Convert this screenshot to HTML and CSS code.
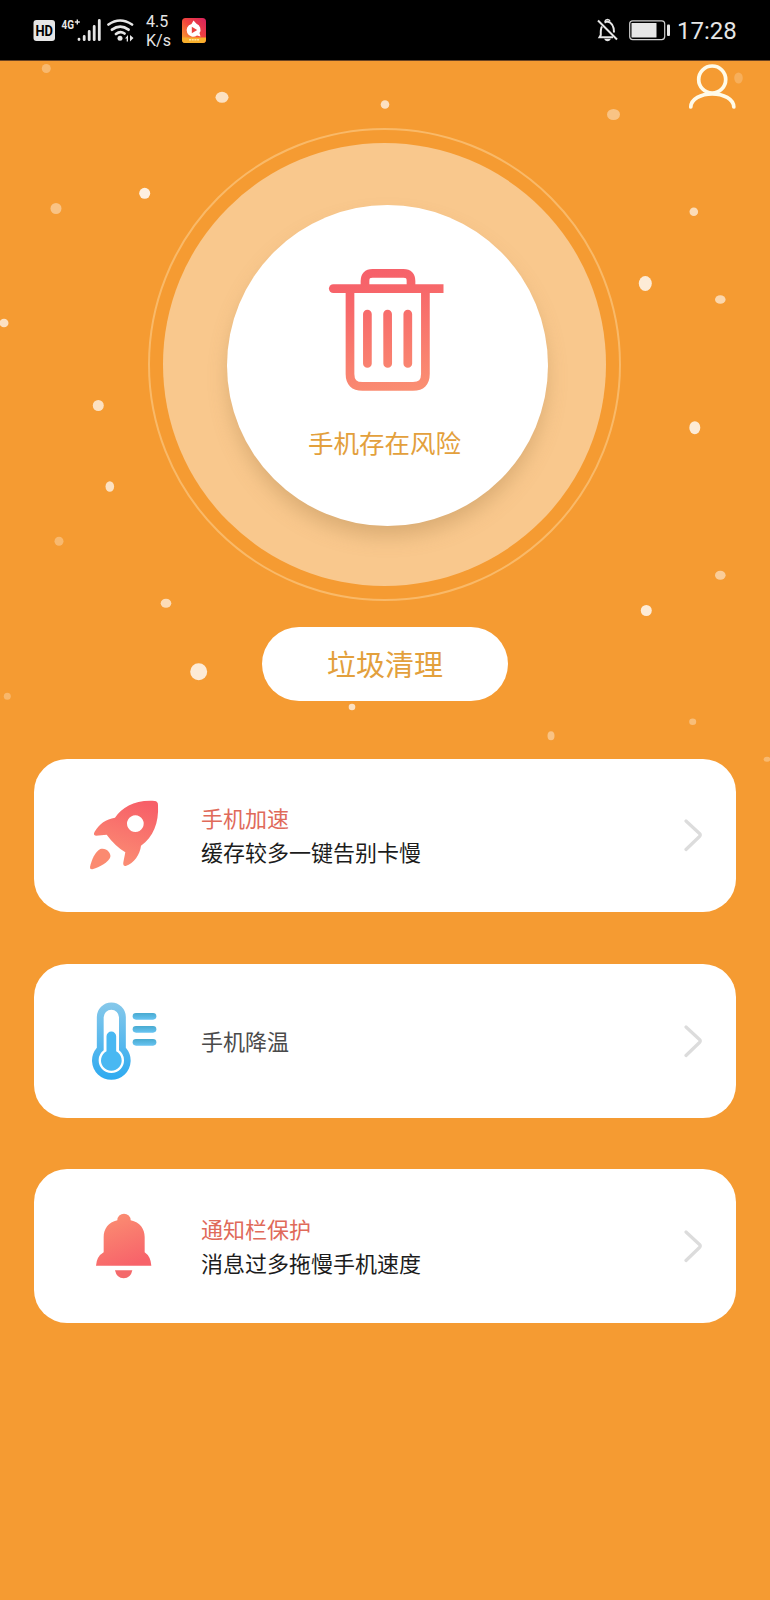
FILE: index.html
```html
<!DOCTYPE html>
<html lang="zh-CN">
<head>
  <meta charset="UTF-8" />
  <title>手机清理</title>
  <meta name="viewport" content="width=device-width, initial-scale=1" />
  <link rel="stylesheet" href="styles.css">
</head>
<body>
  <header class="status">
    <svg class="status-left" width="106" height="30" viewBox="30 15 106 30">
      <rect x="33.500" y="20" width="21.500" height="21" rx="3" fill="#e6e6e6"/>
      <text class="hd" x="35.500" y="35.500" textLength="17.500" lengthAdjust="spacingAndGlyphs">HD</text>
      <text class="net" x="61.500" y="29" textLength="12.500" lengthAdjust="spacingAndGlyphs">4G</text>
      <path d="M77.300 19.500v5M74.800 22h5" stroke="#e6e6e6" stroke-width="1.400"/>
      <g stroke="#e6e6e6" stroke-width="2.800" stroke-linecap="round">
        <path d="M79 39.200v.4M84.200 36.500v3.200M89.200 31.500v8.200M94.200 26.500v13.200M99.300 20.500v19.200"/>
      </g>
      <g fill="none" stroke="#e6e6e6" stroke-width="2.700" stroke-linecap="round">
        <path d="M108.500 24.500Q120 16.500 132 24.500M112 29.700Q120.300 23.500 128.500 29.700M116 34Q120.300 30.500 124.500 33.500"/>
      </g>
      <circle cx="120" cy="38.300" r="2.500" fill="#e6e6e6"/>
      <path d="M128 35v6.500h-1.300v-3H125zM130 35v6.500l3.500-3.500z" fill="#e6e6e6"/>
    </svg>
    <div class="speed">4.5<br>K/s</div>
    <svg class="app" width="24" height="25" viewBox="0 0 24 25">
      <defs>
        <linearGradient id="appBg" x1="1" y1="0" x2="0" y2="1">
          <stop offset="0" stop-color="#d8205f"/>
          <stop offset=".5" stop-color="#f2463c"/>
          <stop offset="1" stop-color="#fbb12d"/>
        </linearGradient>
      </defs>
      <rect width="24" height="25" rx="3.500" fill="url(#appBg)"/>
      <path d="M0 19.500h24v2a3.500 3.500 0 0 1-3.500 3.500h-17A3.500 3.500 0 0 1 0 21.500z" fill="#f9b02c"/>
      <path d="M11.500 2.500l3 3.200a6.300 6.300 0 0 1 3 9.300l1 3.500-3.500-1A6.500 6.500 0 1 1 9.500 6z" fill="#fff"/>
      <path d="M9.800 8.800v6.400l5.400-3.200z" fill="#e8443f"/>
      <path d="M7 21.800h10" stroke="#fde3a0" stroke-width="1.500" stroke-dasharray="2 .7"/>
    </svg>
    <svg class="status-right" width="78" height="26" viewBox="595 17 78 26">
      <g fill="none" stroke="#e6e6e6" stroke-width="2">
        <path d="M602 26.500Q600.500 29 600.800 35L599.500 37.300H613M604.500 22.500Q606.500 21.500 607.500 21.500Q614 23 614 32.500"/>
        <path d="M605 21.500Q605.500 19.500 607.500 19.500T610 21.500" stroke-width="1.600"/>
        <path d="M598 20.500L617 39.500"/>
      </g>
      <path d="M604 38.700h7q-1.500 2.500-3.500 2.500t-3.500-2.500z" fill="#e6e6e6"/>
      <rect x="629.700" y="20.800" width="35" height="18.800" rx="3" fill="none" stroke="#d0d0d0" stroke-width="1.200"/>
      <rect x="631.500" y="23" width="25" height="14.500" rx=".5" fill="#e6e6e6"/>
      <rect x="667" y="24.500" width="3" height="11.500" rx="1" fill="#e6e6e6"/>
    </svg>
    <div class="time">17:28</div>
  </header>

  <svg class="dots" width="770" height="709" viewBox="0 61 770 709" fill="#fff">
    <ellipse cx="46.300" cy="68.500" rx="4.500" ry="4.500" opacity=".3"/>
    <ellipse cx="222" cy="97.300" rx="6.500" ry="5.500" opacity=".7"/>
    <ellipse cx="385" cy="104.500" rx="4.300" ry="4.300" opacity=".7"/>
    <ellipse cx="613.500" cy="114.500" rx="6.500" ry="5.500" opacity=".4"/>
    <ellipse cx="738.500" cy="78" rx="4.300" ry="5.500" opacity=".2"/>
    <ellipse cx="144.700" cy="193.300" rx="5.500" ry="5.500" opacity=".85"/>
    <ellipse cx="56" cy="208.500" rx="5.500" ry="5.500" opacity=".4"/>
    <ellipse cx="4" cy="323" rx="4.500" ry="4.300" opacity=".7"/>
    <ellipse cx="693.800" cy="211.700" rx="4.300" ry="4.300" opacity=".65"/>
    <ellipse cx="645.300" cy="283.500" rx="6.500" ry="7.500" opacity=".8"/>
    <ellipse cx="720.300" cy="299.500" rx="5.300" ry="4.300" opacity=".6"/>
    <ellipse cx="694.800" cy="427.700" rx="5.500" ry="6.500" opacity=".8"/>
    <ellipse cx="98.300" cy="405.500" rx="5.500" ry="5.500" opacity=".7"/>
    <ellipse cx="109.800" cy="486.500" rx="4.300" ry="5.300" opacity=".7"/>
    <ellipse cx="59" cy="541.300" rx="4.500" ry="4.500" opacity=".3"/>
    <ellipse cx="166" cy="603.300" rx="5.300" ry="4.500" opacity=".65"/>
    <ellipse cx="198.700" cy="671.700" rx="8.500" ry="8.500" opacity=".8"/>
    <ellipse cx="7.300" cy="696.300" rx="3.500" ry="3.500" opacity=".28"/>
    <ellipse cx="720.300" cy="575.300" rx="5.300" ry="4.500" opacity=".5"/>
    <ellipse cx="646.300" cy="610.500" rx="5.500" ry="5.500" opacity=".8"/>
    <ellipse cx="352" cy="707" rx="3.300" ry="3.300" opacity=".7"/>
    <ellipse cx="692.700" cy="721.700" rx="3.500" ry="3.300" opacity=".35"/>
    <ellipse cx="551" cy="735.700" rx="3.500" ry="4.500" opacity=".4"/>
    <ellipse cx="767" cy="759.300" rx="3.300" ry="2.500" opacity=".3"/>
  </svg>

  <main class="page">
    <div class="topbar">
      <svg width="48" height="46" viewBox="688 64 48 46" fill="none" stroke="#fffbe9" stroke-width="3.700" stroke-linecap="round">
        <circle cx="712.200" cy="79.500" r="13.500"/>
        <path d="M690.800 107C691 99 701 93.800 712.200 93.800S733.600 99 733.800 107"/>
      </svg>
    </div>

    <section class="ring">
      <div class="halo">
        <div class="disc">
          <svg class="trash" width="117" height="124" viewBox="328 268 117 124" fill="none" stroke="url(#red)" stroke-width="8.700">
            <defs>
              <linearGradient id="red" gradientUnits="userSpaceOnUse" x1="370" y1="268" x2="400" y2="392">
                <stop offset="0" stop-color="#f6606a"/>
                <stop offset=".25" stop-color="#f7676a"/>
                <stop offset="1" stop-color="#fa8e72"/>
              </linearGradient>
            </defs>
            <path fill="url(#red)" stroke="none" d="M333.300 284.200H443.500V293H333.300A4.400 4.400 0 0 1 333.300 284.200z"/>
            <path d="M365 288V281Q365 273.300 372.500 273.300H403.500Q411 273.300 411 281V288"/>
            <path d="M350 290V374Q350 386.400 362.500 386.400H413Q425.400 386.400 425.400 374V290"/>
            <path stroke-linecap="round" d="M367.400 314V363.400M387.600 314L387.700 363.400M407.800 314V363.400"/>
          </svg>
          <p class="risk">手机存在风险</p>
        </div>
      </div>
    </section>

    <button class="clean">垃圾清理</button>

    <div class="cards">
      <div class="card">
        <svg class="icon" width="72" height="80" viewBox="84 46 216 240">
          <defs>
            <linearGradient id="rocket" x1=".7" y1="0" x2=".35" y2="1">
              <stop offset="0" stop-color="#f75f68"/>
              <stop offset="1" stop-color="#fb8f74"/>
            </linearGradient>
          </defs>
          <path fill="url(#rocket)" fill-rule="evenodd" d="M284 64Q294 65 294 76C297 130 280 172 243 198C240 225 222 250 197 259Q188 260 190 248L196 218Q164 198 140 165L108 168Q98 166 104 156C118 132 138 118 165 114C188 82 225 60 284 64zM226 107a25 25 0 1 0 .1 0z"/>
          <path fill="#fb8a70" d="M97 269Q89 270 90 262C95 240 105 217 121 208C138 203 153 218 151 232C147 246 122 261 97 269z"/>
        </svg>
        <div class="info">
          <h3>手机加速</h3>
          <p>缓存较多一键告别卡慢</p>
        </div>
        <svg class="arrow" width="20" height="34" viewBox="0 0 20 34"><path d="M3 3L16.500 15.500Q18 17 16.500 18.500L3 31.500"/></svg>
      </div>

      <div class="card">
        <svg class="icon" width="72" height="80" viewBox="84 62 216 240">
          <defs>
            <linearGradient id="blue" x1="0" y1="0" x2="0" y2="1">
              <stop offset="0" stop-color="#86c8ea"/>
              <stop offset="1" stop-color="#2eaaf0"/>
            </linearGradient>
            <linearGradient id="line" x1="0" y1="0" x2="0" y2="1">
              <stop offset="0" stop-color="#48aad0"/>
              <stop offset="1" stop-color="#68c4f2"/>
            </linearGradient>
          </defs>
          <path fill="url(#blue)" d="M110.500 202V110a43.500 43.500 0 0 1 87 0V202A58 58 0 1 1 110.500 202z"/>
          <path fill="#fff" d="M131 210V111a23 23 0 0 1 46 0V210A38 38 0 1 1 131 210z"/>
          <path fill="#49b8f2" d="M139.500 213V168a14.500 14.500 0 0 1 29 0V213A31 31 0 1 1 139.500 213z"/>
          <g fill="url(#line)">
            <rect x="218" y="98" width="71" height="20" rx="10"/>
            <rect x="218" y="137" width="71" height="20" rx="10"/>
            <rect x="218" y="176" width="71" height="20" rx="10"/>
          </g>
        </svg>
        <div class="info">
          <p class="single">手机降温</p>
        </div>
        <svg class="arrow" width="20" height="34" viewBox="0 0 20 34"><path d="M3 3L16.500 15.500Q18 17 16.500 18.500L3 31.500"/></svg>
      </div>

      <div class="card">
        <svg class="icon" width="72" height="80" viewBox="84 49 216 240">
          <defs>
            <linearGradient id="bell" x1=".2" y1="0" x2=".6" y2="1">
              <stop offset="0" stop-color="#fb8f72"/>
              <stop offset="1" stop-color="#f7636a"/>
            </linearGradient>
          </defs>
          <path fill="url(#bell)" d="M172 92A20 20 0 0 1 212 92C240 98 254 118 254 142V188Q272 200 274 228H108Q110 200 131 188V142C131 118 145 98 172 92z"/>
          <path fill="#f4696b" d="M165 242H217Q212 266 191 266T165 242z"/>
        </svg>
        <div class="info">
          <h3>通知栏保护</h3>
          <p>消息过多拖慢手机速度</p>
        </div>
        <svg class="arrow" width="20" height="34" viewBox="0 0 20 34"><path d="M3 3L16.500 15.500Q18 17 16.500 18.500L3 31.500"/></svg>
      </div>
    </div>
  </main>
</body>
</html>
```

FILE: styles.css
```css
* {
  box-sizing: border-box;
}
body {
  margin: 0;
  min-height: 1600px;
  position: relative;
  background: #f59b32;
  font-family: "Noto Sans CJK SC", sans-serif;
}
h3, p {
  margin: 0;
  font-weight: 400;
}
svg {
  display: block;
  flex: none;
}
.status {
  height: 61px;
  background: #000;
  border-bottom: 1px solid #6b4423;
  display: flex;
  align-items: center;
  padding: 0 33px 0 30px;
  color: #e6e6e6;
  font-family: Roboto, sans-serif;
}
.hd {
  font: bold 14.5px Roboto, sans-serif;
  fill: #000;
}
.net {
  font: bold 13px Roboto, sans-serif;
  fill: #e6e6e6;
}
.speed {
  width: 36px;
  margin-left: 10px;
  padding-top: 2px;
  font-size: 16px;
  line-height: 19px;
  white-space: nowrap;
}
.status-right {
  margin-left: auto;
}
.app {
  margin-top: 1px;
}
.time {
  margin: 1px 0 0 4px;
  width: 60px;
  font-size: 24px;
  line-height: 28px;
}
.dots {
  position: absolute;
  left: 0;
  top: 61px;
}
.page {
  position: relative;
  display: flex;
  flex-direction: column;
  align-items: center;
}
.topbar {
  width: 100%;
  height: 67px;
  padding: 3px 34px 0;
  display: flex;
  justify-content: flex-end;
}
.ring {
  width: 473px;
  height: 473px;
  margin-right: 1px;
  border: 2px solid #f9b968;
  border-radius: 50%;
  display: flex;
  align-items: center;
  justify-content: center;
}
.halo {
  width: 443px;
  height: 443px;
  border-radius: 50%;
  background: #f9c88d;
  display: flex;
  align-items: center;
  justify-content: center;
}
.disc {
  width: 321px;
  height: 321px;
  margin: 2px 0 0 6px;
  padding-top: 63px;
  border-radius: 50%;
  background: #fff;
  box-shadow: 0 12px 20px -2px rgba(160, 120, 70, 0.35);
  display: flex;
  flex-direction: column;
  align-items: center;
}
.trash {
  margin-right: 2px;
}
.risk {
  margin: 31px 6px 0 0;
  font-size: 25.5px;
  line-height: 38px;
  color: #e3a03c;
}
.clean {
  width: 246px;
  height: 74px;
  margin-top: 26px;
  padding: 0 0 2px;
  border: none;
  border-radius: 37px;
  background: #fff;
  color: #e3a03c;
  font-family: inherit;
  font-size: 29px;
  line-height: 72px;
}
.cards {
  width: 702px;
  margin-top: 57.5px;
  display: flex;
  flex-direction: column;
  gap: 51.5px;
}
.card {
  height: 153.8px;
  padding: 0 33px 0 54px;
  border-radius: 33px;
  background: #fff;
  display: flex;
  align-items: center;
}
.info {
  flex: 1;
  margin-left: 41px;
  padding-bottom: 2px;
  font-size: 22px;
  line-height: 34px;
  color: #1c1c1c;
}
.info h3 {
  font-size: 22px;
  color: #e06a5a;
}
.info .single {
  color: #4a4a4a;
}
.arrow {
  fill: none;
  stroke: #dcdcdc;
  stroke-width: 3.2;
  stroke-linecap: round;
}
```
